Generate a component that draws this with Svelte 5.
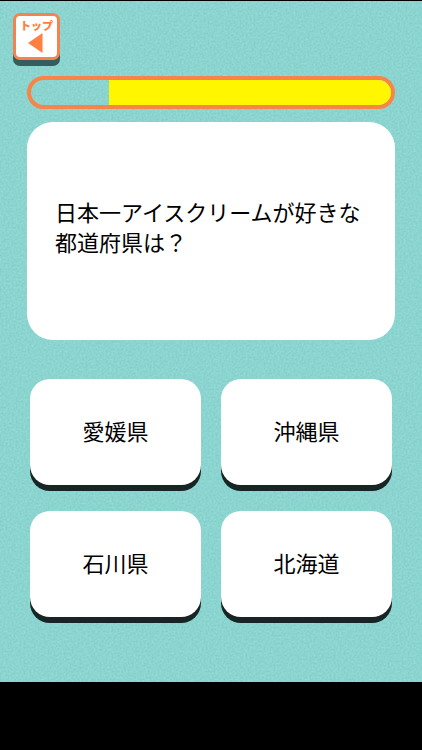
<script>
  const question = '日本一アイスクリームが好きな都道府県は？';
  const choices = ['愛媛県', '沖縄県', '石川県', '北海道'];
  const remaining = 78.3;
</script>

<div class="screen">
  <main>
    <svg class="paper" aria-hidden="true">
      <filter id="grain" x="0" y="0" width="100%" height="100%" color-interpolation-filters="sRGB">
        <feTurbulence type="fractalNoise" baseFrequency="0.5" numOctaves="2" seed="4" />
        <feColorMatrix values="0.12 0 0 0 0.485  0.09 0 0 0 0.788  0.09 0 0 0 0.768  0 0 0 0 1" />
      </filter>
      <rect width="100%" height="100%" filter="url(#grain)" />
    </svg>

    <button class="top" type="button">
      <span>トップ</span>
      <svg width="18" height="20" viewBox="0 0 18 20" aria-hidden="true">
        <path d="M0 10 14.500 0V20Z" fill="#ff8040" />
      </svg>
    </button>

    <div
      class="timer"
      role="progressbar"
      aria-label="残り時間"
      aria-valuemin="0"
      aria-valuemax="100"
      aria-valuenow={remaining}
    >
      <div class="fill" style="width: {remaining}%"></div>
    </div>

    <section class="question">
      <p>{question}</p>
    </section>

    <div class="choices">
      {#each choices as choice}
        <button class="choice" type="button">{choice}</button>
      {/each}
    </div>
  </main>
  <footer></footer>
</div>

<style>
  .screen {
    display: flex;
    flex-direction: column;
    min-height: 100vh;
    background: #000;
    color: #000;
    font-family: 'Noto Sans CJK JP', sans-serif;
  }

  main {
    position: relative;
    isolation: isolate;
    flex: 1;
    display: flex;
    flex-direction: column;
    box-sizing: border-box;
    margin-top: 1px;
    padding: 12px 27px 24px;
    background: #8ad4cf;
  }

  .paper {
    position: absolute;
    z-index: -1;
    inset: 0;
    width: 100%;
    height: 100%;
  }

  button {
    border: 0;
    color: inherit;
    font-family: inherit;
    cursor: pointer;
  }

  .top {
    display: flex;
    flex-direction: column;
    align-items: center;
    box-sizing: border-box;
    width: 47px;
    height: 47px;
    margin-left: -14px;
    padding: 1px 0 0;
    border: 3px solid #f58350;
    border-radius: 7px;
    background: #fff;
    box-shadow: 0 6px 0 #355d5c;
    color: #ff8040;
    font-size: 11px;
    font-weight: 900;
    line-height: 16px;
    white-space: nowrap;
  }

  .top svg {
    flex: none;
  }

  .timer {
    display: flex;
    justify-content: flex-end;
    box-sizing: border-box;
    height: 33px;
    margin-top: 16px;
    border: 4px solid #f98447;
    border-radius: 17px;
    overflow: hidden;
  }

  .fill {
    background: #fff600;
  }

  .question {
    display: flex;
    align-items: center;
    box-sizing: border-box;
    min-height: 218px;
    margin-top: 13px;
    padding: 0 24px 10px 28px;
    border-radius: 26px;
    background: #fff;
  }

  .question p {
    margin: 0;
    font-size: 22px;
    font-weight: 400;
    line-height: 30px;
  }

  .choices {
    display: grid;
    grid-template-columns: 1fr 1fr;
    gap: 26px 20px;
    margin: 39px 3px 0;
  }

  .choice {
    height: 106px;
    padding: 0 0 4px;
    border-radius: 20px;
    background: #fff;
    box-shadow: 0 6px 0 #172524;
    font-size: 22px;
    font-weight: 400;
    line-height: 30px;
  }

  footer {
    height: 68px;
    background: #000;
  }
</style>
